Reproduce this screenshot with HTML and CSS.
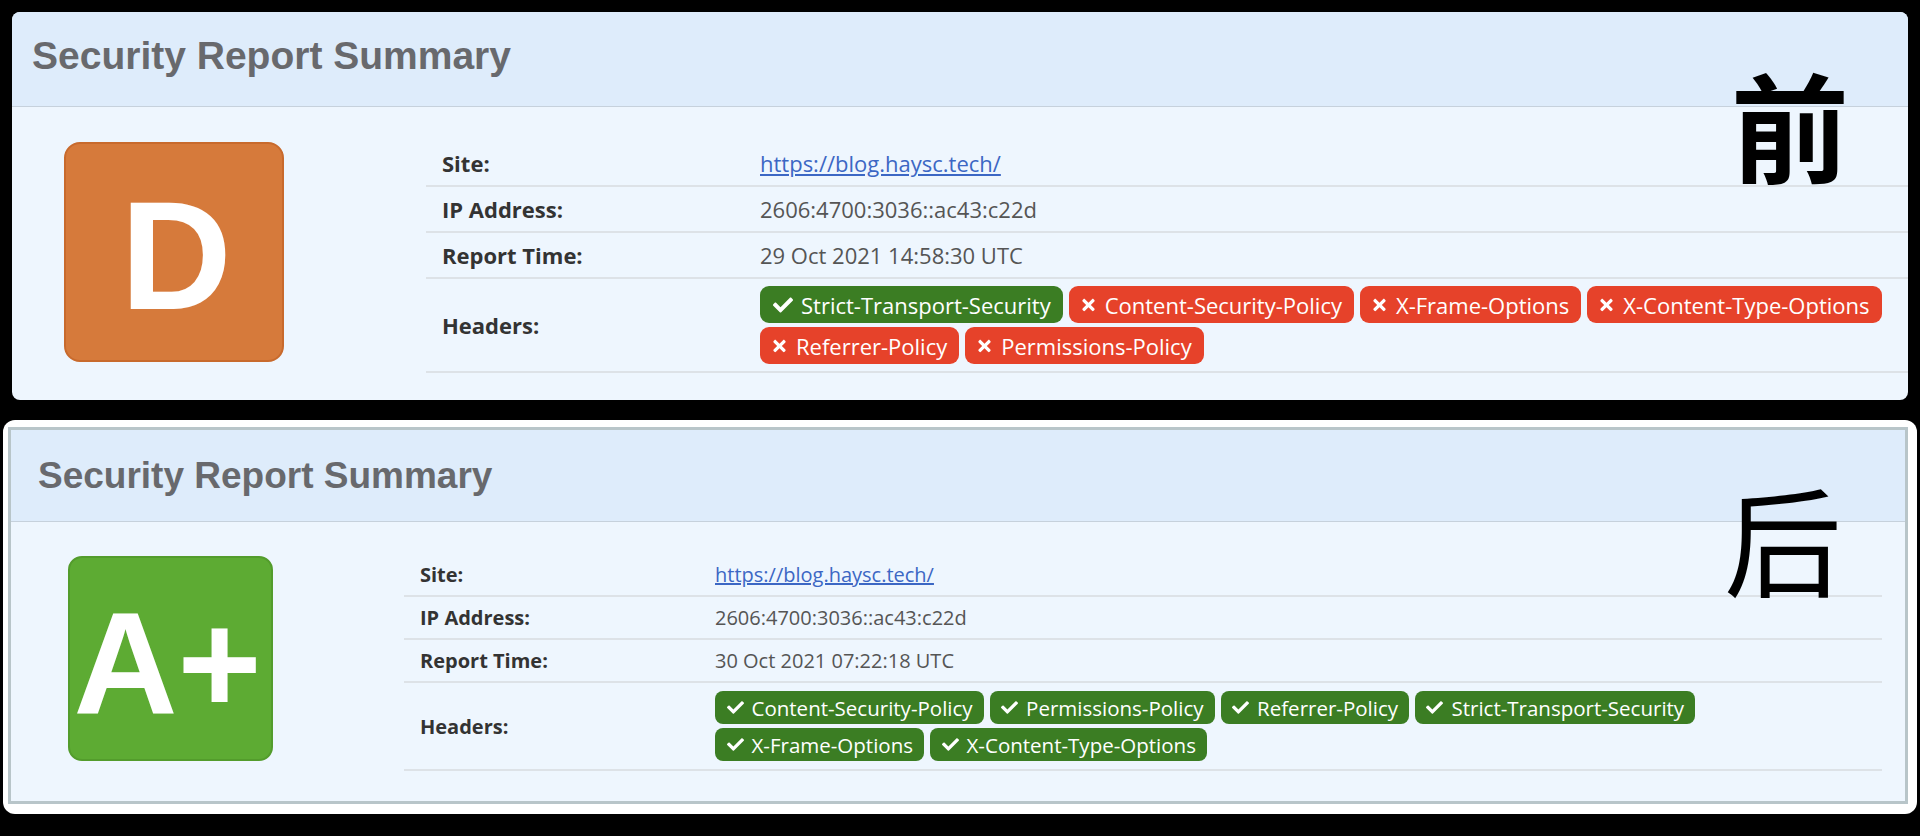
FILE: index.html
```html
<!DOCTYPE html>
<html lang="zh">
<head>
<meta charset="utf-8">
<title>Security Report Summary</title>
<link rel="stylesheet" href="styles.css">
</head>
<body>
<div class="shot">
  <section class="card card-before">
    <header class="card-head"><h2 class="card-title">Security Report Summary</h2></header>
    <div class="card-body">
      <div class="grade grade-d"><span>D</span></div>
      <div class="info">
        <div class="row"><div class="label">Site:</div><div class="value"><a class="site-link" href="#">https://blog.haysc.tech/</a></div></div>
        <div class="row"><div class="label">IP Address:</div><div class="value">2606:4700:3036::ac43:c22d</div></div>
        <div class="row"><div class="label">Report Time:</div><div class="value">29 Oct 2021 14:58:30 UTC</div></div>
        <div class="row row-headers"><div class="label">Headers:</div>
          <div class="value badges">
            <span class="badge ok"><svg class="ico ico-check" viewBox="0 0 512 512"><path d="M173.898 439.404l-166.4-166.4c-9.997-9.997-9.997-26.206 0-36.204l36.203-36.204c9.997-9.998 26.207-9.998 36.204 0L192 312.69 432.095 72.596c9.997-9.997 26.207-9.997 36.204 0l36.203 36.204c9.997 9.997 9.997 26.206 0 36.204l-294.4 294.401c-9.998 9.997-26.207 9.997-36.204-.001z"/></svg>Strict-Transport-Security</span>
            <span class="badge bad"><svg class="ico ico-x" viewBox="0 0 352 512"><path d="M242.72 256l100.07-100.07c12.28-12.28 12.28-32.19 0-44.48l-22.24-22.24c-12.28-12.28-32.19-12.28-44.48 0L176 189.28 75.93 89.21c-12.28-12.28-32.19-12.28-44.48 0L9.21 111.45c-12.28 12.28-12.28 32.19 0 44.48L109.28 256 9.21 356.07c-12.28 12.28-12.28 32.19 0 44.48l22.24 22.24c12.28 12.28 32.2 12.28 44.48 0L176 322.72l100.07 100.07c12.28 12.28 32.2 12.28 44.48 0l22.24-22.24c12.28-12.28 12.28-32.19 0-44.48L242.72 256z"/></svg>Content-Security-Policy</span>
            <span class="badge bad"><svg class="ico ico-x" viewBox="0 0 352 512"><path d="M242.72 256l100.07-100.07c12.28-12.28 12.28-32.19 0-44.48l-22.24-22.24c-12.28-12.28-32.19-12.28-44.48 0L176 189.28 75.93 89.21c-12.28-12.28-32.19-12.28-44.48 0L9.21 111.45c-12.28 12.28-12.28 32.19 0 44.48L109.28 256 9.21 356.07c-12.28 12.28-12.28 32.19 0 44.48l22.24 22.24c12.28 12.28 32.2 12.28 44.48 0L176 322.72l100.07 100.07c12.28 12.28 32.2 12.28 44.48 0l22.24-22.24c12.28-12.28 12.28-32.19 0-44.48L242.72 256z"/></svg>X-Frame-Options</span>
            <span class="badge bad"><svg class="ico ico-x" viewBox="0 0 352 512"><path d="M242.72 256l100.07-100.07c12.28-12.28 12.28-32.19 0-44.48l-22.24-22.24c-12.28-12.28-32.19-12.28-44.48 0L176 189.28 75.93 89.21c-12.28-12.28-32.19-12.28-44.48 0L9.21 111.45c-12.28 12.28-12.28 32.19 0 44.48L109.28 256 9.21 356.07c-12.28 12.28-12.28 32.19 0 44.48l22.24 22.24c12.28 12.28 32.2 12.28 44.48 0L176 322.72l100.07 100.07c12.28 12.28 32.2 12.28 44.48 0l22.24-22.24c12.28-12.28 12.28-32.19 0-44.48L242.72 256z"/></svg>X-Content-Type-Options</span>
            <span class="badge bad"><svg class="ico ico-x" viewBox="0 0 352 512"><path d="M242.72 256l100.07-100.07c12.28-12.28 12.28-32.19 0-44.48l-22.24-22.24c-12.28-12.28-32.19-12.28-44.48 0L176 189.28 75.93 89.21c-12.28-12.28-32.19-12.28-44.48 0L9.21 111.45c-12.28 12.28-12.28 32.19 0 44.48L109.28 256 9.21 356.07c-12.28 12.28-12.28 32.19 0 44.48l22.24 22.24c12.28 12.28 32.2 12.28 44.48 0L176 322.72l100.07 100.07c12.28 12.28 32.2 12.28 44.48 0l22.24-22.24c12.28-12.28 12.28-32.19 0-44.48L242.72 256z"/></svg>Referrer-Policy</span>
            <span class="badge bad"><svg class="ico ico-x" viewBox="0 0 352 512"><path d="M242.72 256l100.07-100.07c12.28-12.28 12.28-32.19 0-44.48l-22.24-22.24c-12.28-12.28-32.19-12.28-44.48 0L176 189.28 75.93 89.21c-12.28-12.28-32.19-12.28-44.48 0L9.21 111.45c-12.28 12.28-12.28 32.19 0 44.48L109.28 256 9.21 356.07c-12.28 12.28-12.28 32.19 0 44.48l22.24 22.24c12.28 12.28 32.2 12.28 44.48 0L176 322.72l100.07 100.07c12.28 12.28 32.2 12.28 44.48 0l22.24-22.24c12.28-12.28 12.28-32.19 0-44.48L242.72 256z"/></svg>Permissions-Policy</span>
          </div>
        </div>
      </div>
    </div>
  </section>

  <div class="frame">
    <section class="card card-after">
      <header class="card-head"><h2 class="card-title">Security Report Summary</h2></header>
      <div class="card-body">
        <div class="grade grade-a"><span>A+</span></div>
        <div class="info">
          <div class="row"><div class="label">Site:</div><div class="value"><a class="site-link" href="#">https://blog.haysc.tech/</a></div></div>
          <div class="row"><div class="label">IP Address:</div><div class="value">2606:4700:3036::ac43:c22d</div></div>
          <div class="row"><div class="label">Report Time:</div><div class="value">30 Oct 2021 07:22:18 UTC</div></div>
          <div class="row row-headers"><div class="label">Headers:</div>
            <div class="value badges">
              <span class="badge ok"><svg class="ico ico-check" viewBox="0 0 512 512"><path d="M173.898 439.404l-166.4-166.4c-9.997-9.997-9.997-26.206 0-36.204l36.203-36.204c9.997-9.998 26.207-9.998 36.204 0L192 312.69 432.095 72.596c9.997-9.997 26.207-9.997 36.204 0l36.203 36.204c9.997 9.997 9.997 26.206 0 36.204l-294.4 294.401c-9.998 9.997-26.207 9.997-36.204-.001z"/></svg>Content-Security-Policy</span>
              <span class="badge ok"><svg class="ico ico-check" viewBox="0 0 512 512"><path d="M173.898 439.404l-166.4-166.4c-9.997-9.997-9.997-26.206 0-36.204l36.203-36.204c9.997-9.998 26.207-9.998 36.204 0L192 312.69 432.095 72.596c9.997-9.997 26.207-9.997 36.204 0l36.203 36.204c9.997 9.997 9.997 26.206 0 36.204l-294.4 294.401c-9.998 9.997-26.207 9.997-36.204-.001z"/></svg>Permissions-Policy</span>
              <span class="badge ok"><svg class="ico ico-check" viewBox="0 0 512 512"><path d="M173.898 439.404l-166.4-166.4c-9.997-9.997-9.997-26.206 0-36.204l36.203-36.204c9.997-9.998 26.207-9.998 36.204 0L192 312.69 432.095 72.596c9.997-9.997 26.207-9.997 36.204 0l36.203 36.204c9.997 9.997 9.997 26.206 0 36.204l-294.4 294.401c-9.998 9.997-26.207 9.997-36.204-.001z"/></svg>Referrer-Policy</span>
              <span class="badge ok"><svg class="ico ico-check" viewBox="0 0 512 512"><path d="M173.898 439.404l-166.4-166.4c-9.997-9.997-9.997-26.206 0-36.204l36.203-36.204c9.997-9.998 26.207-9.998 36.204 0L192 312.69 432.095 72.596c9.997-9.997 26.207-9.997 36.204 0l36.203 36.204c9.997 9.997 9.997 26.206 0 36.204l-294.4 294.401c-9.998 9.997-26.207 9.997-36.204-.001z"/></svg>Strict-Transport-Security</span>
              <span class="badge ok"><svg class="ico ico-check" viewBox="0 0 512 512"><path d="M173.898 439.404l-166.4-166.4c-9.997-9.997-9.997-26.206 0-36.204l36.203-36.204c9.997-9.998 26.207-9.998 36.204 0L192 312.69 432.095 72.596c9.997-9.997 26.207-9.997 36.204 0l36.203 36.204c9.997 9.997 9.997 26.206 0 36.204l-294.4 294.401c-9.998 9.997-26.207 9.997-36.204-.001z"/></svg>X-Frame-Options</span>
              <span class="badge ok"><svg class="ico ico-check" viewBox="0 0 512 512"><path d="M173.898 439.404l-166.4-166.4c-9.997-9.997-9.997-26.206 0-36.204l36.203-36.204c9.997-9.998 26.207-9.998 36.204 0L192 312.69 432.095 72.596c9.997-9.997 26.207-9.997 36.204 0l36.203 36.204c9.997 9.997 9.997 26.206 0 36.204l-294.4 294.401c-9.998 9.997-26.207 9.997-36.204-.001z"/></svg>X-Content-Type-Options</span>
            </div>
          </div>
        </div>
      </div>
    </section>
  </div>

  <div class="note note-before">前</div>
  <div class="note note-after">后</div>
</div>
</body>
</html>
```

FILE: styles.css
```css
html, body {
  margin: 0;
  padding: 0;
  background: #000;
}

.shot {
  position: relative;
  width: 1920px;
  height: 836px;
  padding-top: 12px;
  box-sizing: border-box;
  overflow: hidden;
  font-family: "Open Sans", "Noto Sans", sans-serif;
}

/* ---------- card ---------- */
.card {
  background: #eef6fe;
  overflow: hidden;
  box-sizing: border-box;
}

.card-head {
  display: flex;
  align-items: center;
  background: #deecfb;
  border-bottom: 1px solid #c6d1dc;
  box-sizing: border-box;
}

.card-title {
  margin: 0;
  font-family: "Liberation Sans", Arial, sans-serif;
  font-weight: bold;
  color: #68696d;
  line-height: 1;
}

.card-body {
  display: flex;
  align-items: flex-start;
}

/* ---------- grade ---------- */
.grade {
  flex: none;
  display: flex;
  align-items: center;
  justify-content: center;
  box-sizing: border-box;
  color: #fff;
  font-family: "Liberation Sans", Arial, sans-serif;
  font-weight: bold;
  line-height: 1;
}

.grade-d {
  width: 220px;
  height: 220px;
  background: #d67a3b;
  border: 2px solid #c86a2d;
  border-radius: 16px;
  font-size: 154px;
  padding-top: 8px;
  padding-left: 4px;
}

.grade-a {
  width: 205px;
  height: 205px;
  background: #5dab33;
  border: 2px solid #539c2c;
  border-radius: 14px;
  font-size: 144px;
  padding-top: 10px;
  padding-right: 6px;
}

/* ---------- info table ---------- */
.info {
  flex: 1;
}

.row {
  display: grid;
  align-items: center;
  border-bottom: 2px solid #dde2e7;
}

.label {
  font-weight: bold;
  color: #333;
}

.value {
  color: #555;
}

.site-link {
  color: #3c67c4;
  text-decoration: underline;
}

.badges {
  display: flex;
  flex-wrap: wrap;
}

.badge {
  display: inline-flex;
  align-items: center;
  box-sizing: border-box;
  color: #fff;
  white-space: nowrap;
}

.badge.ok { background: #3b7d23; }
.badge.bad { background: #e6422a; }

.ico { fill: #fff; flex: none; }

/* ---------- before (top) ---------- */
.card-before {
  margin: 0 12px;
  height: 388px;
  border-radius: 8px;
}

.card-before .card-head {
  height: 95px;
  padding: 0 0 8px 20px;
}

.card-before .card-title { font-size: 39px; }

.card-before .card-body {
  padding: 35px 0 0 52px;
  gap: 142px;
}

.card-before .info { margin-top: -1px; }

.card-before .row {
  grid-template-columns: 334px 1fr;
  min-height: 46px;
  box-sizing: border-box;
  font-size: 22px;
}

.card-before .label { padding-left: 16px; }

.card-before .row-headers { padding: 7px 0; }

.card-before .badges { gap: 4px 6px; }

.card-before .badge {
  height: 37px;
  padding: 0 12px 0 13px;
  border-radius: 9px;
  font-size: 22px;
}

.card-before .ico-check { width: 20px; height: 20px; margin-right: 8px; }
.card-before .ico-x { width: 13px; height: 18px; margin-right: 10px; }

/* ---------- after (bottom) ---------- */
.frame {
  margin: 20px 0 0 3px;
  width: 1914px;
  height: 394px;
  box-sizing: border-box;
  padding: 7px 9px 10px 5px;
  background: #fff;
  border-radius: 12px;
}

.card-after {
  height: 377px;
  border: 3px solid #b8c5c9;
}

.card-after .card-head {
  height: 92px;
  padding: 0 0 0 27px;
}

.card-after .card-title { font-size: 37px; }

.card-after .card-body {
  padding: 34px 23px 0 57px;
  gap: 131px;
}

.card-after .info { margin-top: -2px; }

.card-after .row {
  grid-template-columns: 311px 1fr;
  min-height: 43px;
  box-sizing: border-box;
  font-size: 20px;
}

.card-after .label { padding-left: 16px; }

.card-after .row-headers { padding: 8px 0; }

.card-after .badges { gap: 4px 6px; }

.card-after .badge {
  height: 33px;
  padding: 0 11px 0 11.5px;
  border-radius: 8px;
  font-size: 20.5px;
}

.card-after .ico-check { width: 17px; height: 17px; margin-right: 8px; }

/* ---------- annotations ---------- */
.note {
  position: absolute;
  font-family: "Noto Sans CJK SC", sans-serif;
  font-size: 118px;
  line-height: 1;
  color: #000;
}

.note-before {
  left: 1731px;
  top: 64px;
  font-weight: bold;
}

.note-after {
  left: 1724px;
  top: 478px;
  font-weight: normal;
}
```
